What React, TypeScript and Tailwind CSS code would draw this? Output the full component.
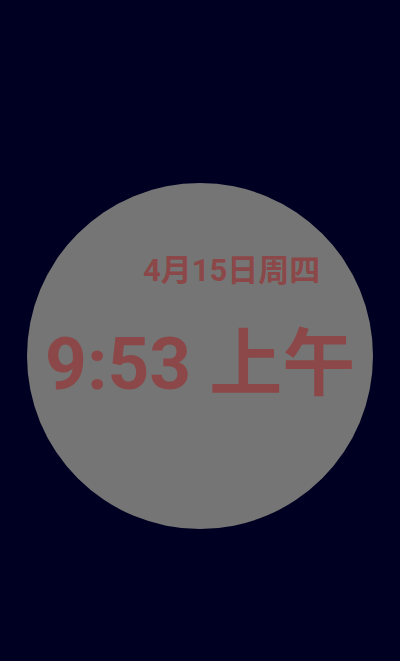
export default function App() {
  return (
    <div className="h-[661px] w-[400px] overflow-hidden bg-[#000022] pt-[183px] pl-[27px]">
      {/* Clock face */}
      <div
        className="flex h-[346px] w-[346px] flex-col rounded-full bg-[#757575] text-[#8c4848]"
        style={{ fontFamily: 'Roboto, "Noto Sans CJK SC", sans-serif' }}
      >
        <div className="mt-[72px] ml-[116px] whitespace-nowrap text-[31px] font-bold leading-none">
          4月15日周四
        </div>
        <div className="mt-[42px] ml-[18px] whitespace-nowrap text-[73px] font-bold leading-none">
          9:53 上午
        </div>
      </div>
    </div>
  )
}
